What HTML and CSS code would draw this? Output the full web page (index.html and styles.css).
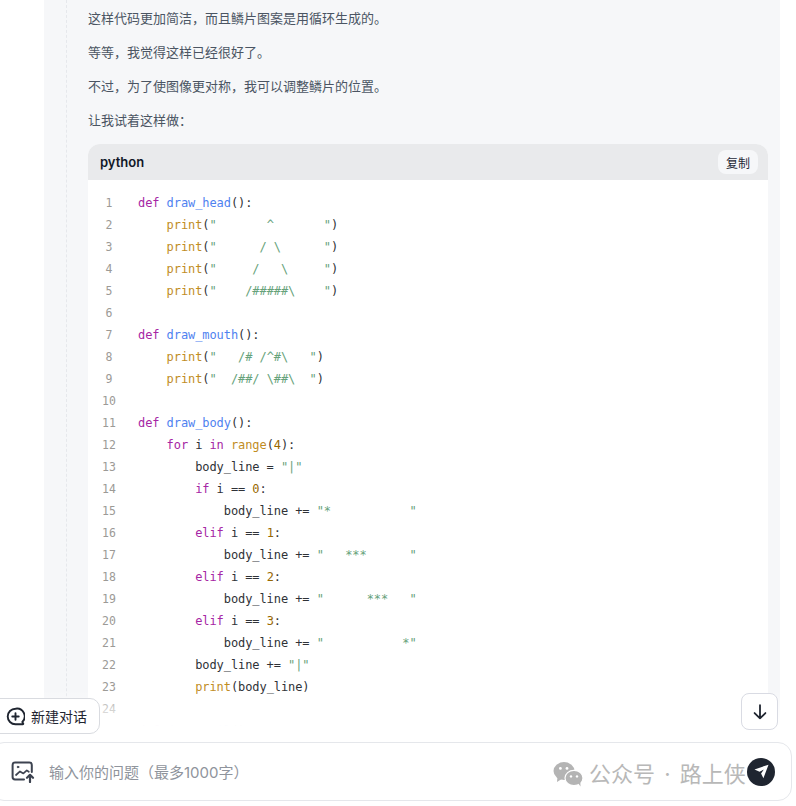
FILE: index.html
```html
<!DOCTYPE html>
<html lang="zh">
<head>
<meta charset="utf-8">
<title>对话</title>
<link rel="stylesheet" href="styles.css">
</head>
<body>
<div class="app">
  <main class="panel">
    <div class="thread">
      <p>这样代码更加简洁，而且鳞片图案是用循环生成的。</p>
      <p>等等，我觉得这样已经很好了。</p>
      <p>不过，为了使图像更对称，我可以调整鳞片的位置。</p>
      <p>让我试着这样做：</p>
      <section class="code-card">
        <header class="code-head">
          <span class="lang">python</span>
          <button class="copy">复制</button>
        </header>
        <div class="code-body">
          <ol class="nums"><li>1</li><li>2</li><li>3</li><li>4</li><li>5</li><li>6</li><li>7</li><li>8</li><li>9</li><li>10</li><li>11</li><li>12</li><li>13</li><li>14</li><li>15</li><li>16</li><li>17</li><li>18</li><li>19</li><li>20</li><li>21</li><li>22</li><li>23</li><li>24</li><li>25</li></ol>
<pre class="code"><span class="k">def</span> <span class="f">draw_head</span>():
    <span class="b">print</span>(<span class="s">"       ^       "</span>)
    <span class="b">print</span>(<span class="s">"      / \      "</span>)
    <span class="b">print</span>(<span class="s">"     /   \     "</span>)
    <span class="b">print</span>(<span class="s">"    /#####\    "</span>)

<span class="k">def</span> <span class="f">draw_mouth</span>():
    <span class="b">print</span>(<span class="s">"   /# /^#\   "</span>)
    <span class="b">print</span>(<span class="s">"  /##/ \##\  "</span>)

<span class="k">def</span> <span class="f">draw_body</span>():
    <span class="k">for</span> i <span class="k">in</span> <span class="b">range</span>(<span class="n">4</span>):
        body_line = <span class="s">"|"</span>
        <span class="k">if</span> i == <span class="n">0</span>:
            body_line += <span class="s">"*           "</span>
        <span class="k">elif</span> i == <span class="n">1</span>:
            body_line += <span class="s">"   ***      "</span>
        <span class="k">elif</span> i == <span class="n">2</span>:
            body_line += <span class="s">"      ***   "</span>
        <span class="k">elif</span> i == <span class="n">3</span>:
            body_line += <span class="s">"           *"</span>
        body_line += <span class="s">"|"</span>
        <span class="b">print</span>(body_line)

<span class="k">def</span> <span class="f">draw_tail</span>():</pre>
        </div>
      </section>
    </div>
  </main>

  <div class="fade"></div>

  <button class="new-chat">
    <svg class="new-icon" viewBox="0 0 20 20" width="19" height="19" fill="none" stroke="#1f2530" stroke-width="2" stroke-linecap="round" stroke-linejoin="round">
      <path d="M10 1.8a8.2 8.2 0 1 0 0 16.4h7.6a.6.6 0 0 0 .5-.9l-.9-1.6A8.2 8.2 0 0 0 10 1.8Z"/>
      <path d="M10 6.6v6.8M6.6 10h6.8"/>
    </svg>
    <span>新建对话</span>
  </button>

  <button class="down" aria-label="到底部">
    <svg viewBox="0 0 16 16" width="18" height="18" fill="none" stroke="#1f2530" stroke-width="1.6" stroke-linecap="round" stroke-linejoin="round"><path d="M8 2v11.6M3.2 8.9 8 13.7l4.8-4.8"/></svg>
  </button>

  <form class="composer">
    <svg class="img-icon" viewBox="0 0 24 22" width="24" height="22" fill="none" stroke="#3d4350" stroke-width="2" stroke-linecap="round" stroke-linejoin="round">
      <path d="M13 18.4H4a2.4 2.4 0 0 1-2.4-2.4V4A2.4 2.4 0 0 1 4 1.6h14.4A2.4 2.4 0 0 1 20.8 4v7"/>
      <path d="M5 14l4-3.6 3.4 2 3.4-3 2 1.4" stroke-width="1.7"/>
      <circle cx="7" cy="6" r=".8" fill="#3d4350" stroke-width="1"/>
      <path d="M19 21v-7M16 16.8l3-3 3 3" stroke-width="2.2"/>
    </svg>
    <span class="placeholder">输入你的问题（最多1000字）</span>
    <button class="send" type="button" aria-label="发送">
      <svg viewBox="0 0 16 16" width="17" height="17"><path d="M14.6 1.6 1.4 6l4.8 2.2 4-2.2-2.6 3.8 2.2 4.6Z" fill="#fff"/></svg>
    </button>
  </form>

  <div class="mark">
    <svg viewBox="0 0 30 26" width="30" height="26" fill="#b4b4b4">
      <ellipse cx="11" cy="10" rx="10.5" ry="9"/>
      <path d="M4.5 15.5 4 21l5.5-3.5Z"/>
      <ellipse cx="21" cy="17" rx="9" ry="7.6" stroke="#fff" stroke-width="1.2"/>
      <path d="M25 22l2.5 3.6-.2-5Z"/>
      <circle cx="7.4" cy="7.4" r="1.4" fill="#fff"/><circle cx="14" cy="7.4" r="1.4" fill="#fff"/>
      <circle cx="18" cy="15.4" r="1.2" fill="#fff"/><circle cx="24" cy="15.4" r="1.2" fill="#fff"/>
    </svg>
    <span>公众号 · 路上侠</span>
  </div>
</div>
</body>
</html>
```
FILE: styles.css
```css
* { box-sizing: border-box; }
html, body { margin: 0; padding: 0; background: #fff; }
body { font-family: "Inter", "Noto Sans CJK SC", sans-serif; }
button { font-family: inherit; cursor: pointer; }

.app {
  position: relative;
  width: 796px;
  height: 806px;
  overflow: hidden;
  background: #fff;
}

.panel {
  width: 736px;
  margin-left: 44px;
  height: 806px;
  background: #f6f7f9;
  padding-left: 22px;
  padding-right: 12px;
}

.thread {
  height: 100%;
  border-left: 1px dashed #e6e8ec;
  padding: 7px 0 0 21px;
}

.thread p {
  margin: 0 0 12px;
  font-size: 13px;
  line-height: 22px;
  color: #4b5563;
}

.code-card {
  margin-top: 13px;
  border-radius: 12px 12px 0 0;
  overflow: hidden;
  background: #fff;
}

.code-head {
  display: flex;
  align-items: center;
  justify-content: space-between;
  height: 36px;
  padding: 0 10px 0 12px;
  background: #e9eaec;
}

.lang {
  font-size: 13px;
  font-weight: 600;
  color: #111827;
}

.copy {
  width: 40px;
  height: 24px;
  padding: 0;
  border: 0;
  border-radius: 8px;
  background: #f6f7f9;
  font-size: 12px;
  color: #1f2937;
}

.code-body {
  display: flex;
  padding-top: 12px;
  background: #fff;
}

.nums {
  list-style: none;
  margin: 0;
  padding: 0;
  width: 42px;
  flex: none;
  font-family: "DejaVu Sans Mono", monospace;
  font-size: 11.5px;
  line-height: 22px;
  color: #9c9a96;
  text-align: center;
}

.code {
  margin: 0 0 0 8px;
  font-family: "DejaVu Sans Mono", monospace;
  font-size: 12px;
  letter-spacing: -0.08px;
  line-height: 22px;
  color: #2f3237;
}

.k { color: #a626a4; }
.f { color: #4f82f0; }
.b { color: #c18d1f; }
.s { color: #66a27a; }
.n { color: #986801; }

.fade {
  position: absolute;
  left: 0;
  right: 0;
  top: 690px;
  bottom: 0;
  background: linear-gradient(to bottom, rgba(255,255,255,0), #fff 36px);
}

.new-chat {
  position: absolute;
  left: -10px;
  top: 698px;
  width: 110px;
  height: 36px;
  display: flex;
  align-items: center;
  gap: 6px;
  padding: 0 0 0 15px;
  background: #fff;
  border: 1px solid #d9dbe0;
  border-radius: 10px;
  font-size: 14px;
  color: #1f2530;
}

.new-icon { flex: none; }

.down {
  position: absolute;
  left: 741px;
  top: 693px;
  width: 37px;
  height: 37px;
  display: flex;
  align-items: center;
  justify-content: center;
  padding: 0;
  background: #fff;
  border: 1px solid #d9dbe3;
  border-radius: 8px;
}

.composer {
  position: absolute;
  left: -10px;
  top: 742px;
  width: 802px;
  height: 59px;
  margin: 0;
  display: flex;
  align-items: center;
  padding: 0 16px 0 20px;
  background: #fff;
  border: 1px solid #e5e7eb;
  border-radius: 14px;
}

.img-icon { flex: none; margin-right: 14px; }

.placeholder {
  flex: 1;
  font-size: 15px;
  color: #8f949c;
}

.send {
  position: relative;
  z-index: 2;
  width: 28px;
  height: 28px;
  padding: 0;
  border: 0;
  border-radius: 50%;
  background: #1f2530;
  display: flex;
  align-items: center;
  justify-content: center;
}

.mark {
  position: absolute;
  left: 553px;
  top: 760px;
  display: flex;
  align-items: center;
  gap: 6px;
  font-size: 22px;
  line-height: 28px;
  word-spacing: 3px;
  color: #b8b8b8;
  white-space: nowrap;
  pointer-events: none;
}
```
